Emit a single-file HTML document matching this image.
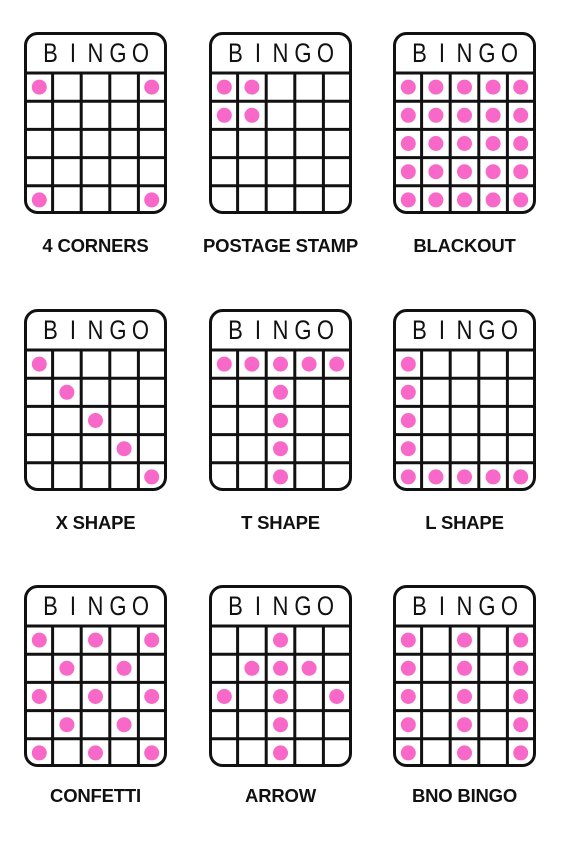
<!DOCTYPE html>
<html><head><meta charset="utf-8"><style>
body{margin:0;background:#fff;width:564px;height:841px;overflow:hidden;position:relative;font-family:"Liberation Sans",sans-serif}
svg{position:absolute;left:0;top:0}
.lbl{position:absolute;width:180px;text-align:center;font-weight:bold;font-size:18.5px;color:#111;letter-spacing:-0.2px}
</style></head><body>
<svg id="s" width="564" height="841"></svg>
<div id="labels"></div>
<script>
var cards=[
 ["4 CORNERS",[[0,0],[0,4],[4,0],[4,4]]],
 ["POSTAGE STAMP",[[0,0],[0,1],[1,0],[1,1]]],
 ["BLACKOUT","all"],
 ["X SHAPE",[[0,0],[1,1],[2,2],[3,3],[4,4]]],
 ["T SHAPE",[[0,0],[0,1],[0,2],[0,3],[0,4],[1,2],[2,2],[3,2],[4,2]]],
 ["L SHAPE",[[0,0],[1,0],[2,0],[3,0],[4,0],[4,1],[4,2],[4,3],[4,4]]],
 ["CONFETTI",[[0,0],[0,2],[0,4],[1,1],[1,3],[2,0],[2,2],[2,4],[3,1],[3,3],[4,0],[4,2],[4,4]]],
 ["ARROW",[[0,2],[1,1],[1,2],[1,3],[2,0],[2,2],[2,4],[3,2],[4,2]]],
 ["BNO BINGO","bno"]
];
var xs=[24,209,393], ys=[32,309,585], ly=[235,512,785];
var h="",lab="";
cards.forEach(function(c,i){
 var X=xs[i%3],Y=ys[Math.floor(i/3)],W=143,cw=W/5,top=Y+41,ch=28.2;
 h+='<rect x="'+(X+1.5)+'" y="'+(Y+1.5)+'" width="'+(W-3)+'" height="'+(182-3)+'" rx="12" fill="#fff" stroke="#111" stroke-width="3"/>';
 h+='<line x1="'+X+'" x2="'+(X+W)+'" y1="'+top+'" y2="'+top+'" stroke="#111" stroke-width="3"/>';
 for(var k=1;k<5;k++){
  h+='<line x1="'+(X+k*cw)+'" x2="'+(X+k*cw)+'" y1="'+top+'" y2="'+(Y+181)+'" stroke="#111" stroke-width="3"/>';
  h+='<line x1="'+X+'" x2="'+(X+W)+'" y1="'+(top+k*ch)+'" y2="'+(top+k*ch)+'" stroke="#111" stroke-width="3"/>';
 }
 "BINGO".split("").forEach(function(L,j){
  var cx=X+W/2-45+j*22.5;
  h+='<text transform="translate('+cx+','+(Y+30)+') scale(0.92,1.12)" text-anchor="middle" font-family="Liberation Sans,sans-serif" font-size="24" fill="#111">'+L+'</text>';
 });
 var d=c[1];
 if(d=="all"){d=[];for(var r=0;r<5;r++)for(var q=0;q<5;q++)d.push([r,q]);}
 if(d=="bno"){d=[];for(var r=0;r<5;r++)[0,2,4].forEach(function(q){d.push([r,q]);});}
 d.forEach(function(p){
  h+='<circle cx="'+(X+cw*p[1]+cw/2+(p[1]==0?1:p[1]==4?-1:0))+'" cy="'+(top+ch*p[0]+ch/2)+'" r="7.5" fill="#f768c8"/>';
 });
 lab+='<div class="lbl" style="left:'+(X+W/2-90)+'px;top:'+ly[Math.floor(i/3)]+'px">'+c[0]+'</div>';
});
document.getElementById("s").innerHTML=h;
document.getElementById("labels").innerHTML=lab;
</script>
</body></html>
